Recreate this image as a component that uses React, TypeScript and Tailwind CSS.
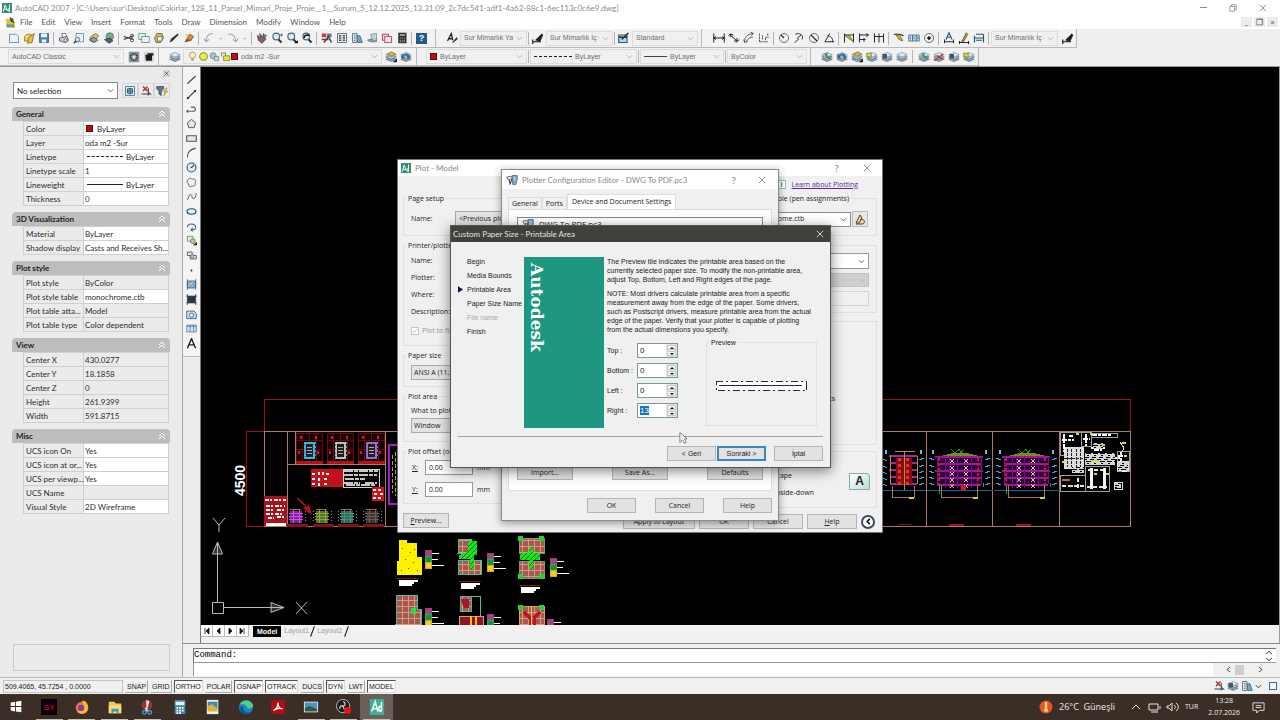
import type { ReactNode } from "react";

/* ---------- icons ---------- */

const INK = "#22303f";
const BLUE = "#3f7fa6";

const sheet = <path d="M2 3h9l3 3v8H2z" fill="#eaf4f8" stroke={BLUE} />;
const layers = (
  <>
    <path d="M1 11l7-3 7 3-7 3z" fill="#8ea3b2" stroke="#5f7789" />
    <path d="M1 8l7-3 7 3-7 3z" fill="#b4c5d0" stroke="#5f7789" />
    <path d="M1 5l7-3 7 3-7 3z" fill="#e4ecf0" stroke="#7d93a2" />
  </>
);
const lens = (
  <>
    <circle cx="7" cy="6" r="4.5" fill="#dcebf2" stroke="#4a6577" strokeWidth="1.5" />
    <path d="M10 10l4 4" stroke={INK} strokeWidth="2.5" />
  </>
);

const ICONS: Record<string, ReactNode> = {
  new: sheet,
  open: (
    <>
      <path d="M2 6l3-3h6l-2 9H2z" fill="#f4d35e" stroke="#8a6d1a" />
      <path d="M7 8l8-6-3 12-6 1z" fill="#e6c04a" stroke="#75601f" />
    </>
  ),
  save: (
    <>
      <path d="M2 2h12v12H2z" fill="#4b83ab" stroke="#2d5877" />
      <path d="M4 2h8v5H4zM5 10h6v4H5z" fill="#eef5f8" />
    </>
  ),
  print: (
    <>
      <path d="M5 2h5l2 5H6z" fill="#fff" stroke="#556" />
      <path d="M2 8l10-2 2 5-4 3-8-2z" fill="#c7ced6" stroke="#445" />
      <circle cx="10" cy="11" r="2" fill="#fff" stroke="#445" />
    </>
  ),
  plotter: (
    <>
      <path d="M1 4l6-1 2 3-6 2z" fill="#dbe6ee" stroke="#456" />
      <path d="M4 8l2 6M8 7l-3 7" stroke="#345" strokeWidth="1.5" />
      <path d="M8 2h7v5l-2 7H9z" fill="#7ea6c4" stroke="#3d5f7a" />
      <path d="M10 5h3M10 8h3" stroke="#fff" />
    </>
  ),
  preview: (
    <>
      <path d="M4 2h10v11H4z" fill="#f3f8fa" stroke={BLUE} />
      <circle cx="6" cy="10" r="3" fill="#d5e6ee" stroke="#3a5b70" />
      <path d="M4 12l-3 3" stroke={INK} strokeWidth="2" />
    </>
  ),
  publish: (
    <>
      <path d="M3 7l7-5 4 3-6 9-5-2z" fill="#e2c65b" stroke="#605528" />
      <path d="M2 10l6-3 5 4-5 3z" fill="#8ba0b5" stroke="#445" />
    </>
  ),
  dwf: (
    <>
      <circle cx="9" cy="6" r="5" fill="#6fae86" stroke="#4a6d75" />
      <path d="M2 10l8-2 3 4-5 3z" fill="#54636e" stroke="#334" />
    </>
  ),
  cut: (
    <>
      <path d="M1 6l13 4M1 10l13-5" stroke="#333" strokeWidth="1.5" />
      <circle cx="12" cy="5" r="2" fill="none" stroke="#333" />
      <circle cx="12" cy="11" r="2" fill="none" stroke="#333" />
    </>
  ),
  copy: (
    <>
      <path d="M1 2h9v8H1z" fill="#e8f2ee" stroke="#4f8a84" />
      <path d="M5 6h10v8H5z" fill="#f5faf8" stroke="#3f7f86" />
    </>
  ),
  paste: (
    <>
      <path d="M2 8l3-6h7l2 6-4 6H4z" fill="#cdbb62" stroke="#5d5b32" />
      <path d="M6 6h6v6H6z" fill="#e8eff0" stroke="#667" />
    </>
  ),
  brush: <path d="M2 14l2-5 9-7 1 2-8 8z" fill="#333" />,
  match: (
    <>
      <path d="M2 14l3-6 5 4z" fill="#7a5a2a" />
      <path d="M6 7l3-4 5 3-4 6z" fill="#e8883a" stroke="#75401a" />
      <path d="M3 5l3-3 2 3" fill="#d8c33a" />
    </>
  ),
  undo: <path d="M13 2C7 2 4 6 4 13M1 9l3 4 4-3" fill="none" stroke="#a6aab0" strokeWidth="1.5" />,
  redo: <path d="M2 3c6-1 9 3 10 10M8 10l4 3 3-4" fill="none" stroke="#a6aab0" strokeWidth="1.5" />,
  drop: <path d="M5 7h6l-3 3z" fill="#bbb" />,
  pan: (
    <>
      <path d="M2 4l4 4-1-6 4 5 1-5 3 8-5 5-5-4z" fill="#8a5d74" stroke="#4b3648" />
      <path d="M11 2l4 3-3 2z" fill="#3b9a62" />
    </>
  ),
  zoom: (
    <>
      {lens}
      <path d="M12 4h4M14 2v4" stroke="#445" />
    </>
  ),
  zoomWin: (
    <>
      {lens}
      <path d="M11 15h5v-4z" fill="#111" />
    </>
  ),
  zoomPrev: (
    <>
      {lens}
      <path d="M4 8c0-4 5-5 7-3" stroke="#111" strokeWidth="2" fill="none" />
    </>
  ),
  props: (
    <>
      <path d="M1 2h6v5H1z" fill="#c83a44" />
      <path d="M8 2h6v5H8z" fill="#6b7788" />
      <path d="M4 14l6-8 4 8M1 10h9" stroke="#5a3e46" strokeWidth="2" fill="none" />
    </>
  ),
  grid: (
    <>
      <path d="M2 2h12v12H2z" fill="#e4ebee" stroke="#455" />
      <path d="M4 5h3M9 5h3M4 8h3M9 8h3M4 11h3M9 11h3" stroke="#456" strokeWidth="2" />
    </>
  ),
  palette: (
    <>
      <path d="M2 2h6v12H2z" fill="#dce8ef" stroke="#345c78" />
      <path d="M8 5h4l3 9H9z" fill="#7aa6bd" stroke="#345c78" />
      <path d="M4 5h2M4 8h2M4 11h2" stroke="#234" />
    </>
  ),
  sheets: (
    <>
      <path d="M2 11l5-2h7v4H5z" fill="#8fa1aa" stroke="#667" />
      <path d="M6 3l8-1v9H9z" fill="#c5d2d8" stroke="#789" />
    </>
  ),
  markup: (
    <>
      <path d="M2 3h8v8H2z" fill="#f5dfe4" stroke="#b34a5c" strokeWidth="1.5" />
      <path d="M5 6h9v8H5z" fill="#ecebf4" stroke="#c2566a" strokeWidth="1.5" />
    </>
  ),
  calc: (
    <>
      <path d="M3 1h11v14H3z" fill="#2e2e2c" />
      <path d="M5 3h7v2H5z" fill="#b9c9a8" />
      <path d="M5 8h7M5 11h7M5 13h7" stroke="#ddd" strokeDasharray="1.5 1.2" />
    </>
  ),
  textStyle: (
    <>
      <path d="M2 12L7 2l2 9M4 9h5" stroke="#222" strokeWidth="1.7" fill="none" />
      <path d="M8 14l6-7 2 2-6 5z" fill="#333" />
    </>
  ),
  dimStyle: (
    <>
      <path d="M1 13h11M1 10v6" stroke="#111" strokeWidth="1.5" />
      <path d="M4 11L13 2l2 2-4 9z" fill="#222" />
    </>
  ),
  tableStyle: (
    <>
      <path d="M1 4h11v10H1z" fill="#bcd7e8" stroke="#295574" strokeWidth="1.5" />
      <path d="M1 7h11M5 10l9-9" stroke="#234" strokeWidth="1.8" />
    </>
  ),
  dimLinear: <path d="M1 2v12M15 2v12M1 8h14M4 6L1 8l3 2M12 6l3 2-3 2" stroke="#222" strokeWidth="1.3" fill="none" />,
  dimAligned: <path d="M1 5l3-3M11 14l4-4M3 4l9 8M3 7V3l4 1M12 8v4H8" stroke="#222" strokeWidth="1.3" fill="none" />,
  dimArc: <path d="M2 13C2 7 6 3 13 2M5 14c0-4 3-7 8-7M1 10l1 4 4-2M10 0l4 2-3 3" stroke="#333" fill="none" />,
  ordinate: <path d="M2 2v12M2 13h12M6 10V4M10 11V7h5M13 2v4" stroke="#444" strokeWidth="1.2" fill="none" strokeDasharray="3 1" />,
  radius: (
    <>
      <circle cx="8" cy="8" r="6" fill="none" stroke="#444" />
      <path d="M8 8L4 4" stroke="#222" strokeWidth="1.5" />
    </>
  ),
  jogged: <path d="M3 3c6-3 12 2 9 7M2 14l5-4-1-2 5-4" stroke="#333" strokeWidth="1.3" fill="none" />,
  diameter: (
    <>
      <circle cx="8" cy="8" r="6" fill="none" stroke="#444" />
      <path d="M4 4l8 8" stroke="#222" strokeWidth="1.5" />
    </>
  ),
  angular: <path d="M2 13h13M3 12L9 2M6 5c4 0 7 3 7 8" stroke="#222" strokeWidth="1.3" fill="none" />,
  quick: (
    <>
      <path d="M2 2v12M14 2v12M2 4h12" stroke="#222" strokeWidth="1.3" />
      <path d="M3 5h6l4 7-5-3z" fill="#c8c13a" stroke="#5f6420" />
    </>
  ),
  baseline: <path d="M2 2v12M2 4h12M2 10h8M11 2l3 2-3 2M8 8v5" stroke="#222" strokeWidth="1.3" fill="none" />,
  cont: <path d="M2 2v12M8 2v12M14 2v12M2 6h12" stroke="#222" strokeWidth="1.3" fill="none" />,
  leader: (
    <>
      <path d="M1 3h8l5 2" stroke="#222" strokeWidth="1.5" fill="none" />
      <path d="M4 4h5l4 8-5-2z" fill="#bcb93a" stroke="#5f6420" />
    </>
  ),
  tol: (
    <>
      <path d="M1 4h14v8H1z" fill="#cfe0ea" stroke="#285878" />
      <path d="M6 4v8M11 4v8M3 6v4M8 6v4M13 6v4" stroke="#285878" />
    </>
  ),
  center: (
    <>
      <circle cx="8" cy="8" r="6" fill="none" stroke="#444" />
      <path d="M8 5.500v5M5.500 8h5" stroke="#111" strokeWidth="2" />
    </>
  ),
  dimEdit: (
    <>
      <path d="M2 10v5M14 10v5M2 13h12" stroke="#222" strokeWidth="1.3" />
      <path d="M4 10L8 1l4 9M6 7h4" stroke="#2b5d74" strokeWidth="1.6" fill="none" />
    </>
  ),
  dimText: (
    <>
      <path d="M1 14h14M2 12v4M14 12v4" stroke="#222" strokeWidth="1.3" />
      <path d="M5 13L11 1l2 2-5 9z" fill="#bba92f" stroke="#4d4a20" />
    </>
  ),
  dimUpdate: <path d="M2 5v9M14 3v11M2 8h12M4 3h10M4 11h8" stroke="#245a63" strokeWidth="1.6" fill="none" />,
  gear: (
    <>
      <path d="M1 1h14v14H1z" fill="#8b979c" />
      <circle cx="8" cy="8" r="4.500" fill="none" stroke="#2c3a40" strokeWidth="2" strokeDasharray="2 1" />
      <circle cx="8" cy="8" r="2" fill="#e2e7e9" />
    </>
  ),
  wsSave: (
    <>
      <path d="M1 1h14v14H1z" fill="#d4d9dc" />
      <path d="M3 5h3V3h8v3h-2v7H4z" fill="#1d1d1d" />
    </>
  ),
  layers,
  layersY: (
    <>
      {layers}
      <path d="M3 4l6-3 5 3-6 3z" fill="#cfc136" stroke="#77702a" />
      <path d="M10 15h6v-5z" fill="#222" />
    </>
  ),
  layersG: (
    <>
      {layers}
      <path d="M4 3h5v4h4v5l-6-3z" fill="#4d8b76" />
    </>
  ),
  layersBack: (
    <>
      {layers}
      <path d="M13 10c1-6-4-9-9-5l-2-1v6h5L5 7c3-2 5-1 5 4z" fill="#36698e" />
    </>
  ),
  layersCut: (
    <>
      {layers}
      <path d="M2 13L13 4M5 6l8 5" stroke="#b53a4a" strokeWidth="2" />
    </>
  ),
  layersLock: (
    <>
      {layers}
      <path d="M2 4h6v6H2z" fill="#41566b" />
    </>
  ),
  layersUnlock: (
    <>
      {layers}
      <path d="M1 3h6v5H1z" fill="#d6dc38" stroke="#6f7a22" />
    </>
  ),
  bulb: (
    <>
      <circle cx="8" cy="6" r="4.500" fill="#f7f4a8" stroke="#8a8a4a" />
      <path d="M6 11h4v3H6z" fill="#99a" />
    </>
  ),
  sun: <circle cx="8" cy="8" r="5.500" fill="#eef03c" stroke="#7d8a3a" strokeWidth="1.500" />,
  vp: (
    <>
      <circle cx="6" cy="7" r="4.500" fill="#a9c4c8" stroke="#5c7d85" />
      <path d="M8 8h6v6H8z" fill="#c9d8db" stroke="#5c7d85" />
    </>
  ),
  unlock: (
    <>
      <path d="M5 7h9v7H5z" fill="#d9e23e" stroke="#6f7a22" />
      <path d="M2 8V3h6v4" fill="none" stroke="#8a9230" strokeWidth="1.500" />
    </>
  ),
  /* draw toolbar */
  line: <path d="M2 14L14 3" stroke={INK} strokeWidth="1.700" />,
  xline: (
    <>
      <path d="M2 14L14 2" stroke={INK} strokeWidth="1.500" />
      <path d="M1 15l1-4 3 3zM15 1l-4 1 3 3z" fill={INK} />
    </>
  ),
  pline: <path d="M1 12h9c5 0 5-6 0-6H7M3 10l-2 2 2 2" stroke="#4d6473" strokeWidth="1.500" fill="none" />,
  polygon: <path d="M8 2l6 5-2 7H4L2 7z" fill="#dfe8e4" stroke="#3f4f4a" strokeWidth="1.300" />,
  rect: <path d="M1 4h14v8H1z" fill="#e3eaec" stroke="#44566a" strokeWidth="1.500" />,
  arc: <path d="M2 15C2 8 6 3 14 2" fill="none" stroke="#3b4d5e" strokeWidth="1.500" />,
  circle: (
    <>
      <circle cx="8" cy="8" r="6.500" fill="#d9eaf2" stroke="#37576f" strokeWidth="1.500" />
      <path d="M8 8l4-4M7 8h2" stroke="#223" strokeWidth="1.500" />
    </>
  ),
  cloud: <path d="M4 3c3-3 5 1 6 0 4-1 5 3 3 5 2 4-1 6-4 5-3 3-6 0-5-3-4-2-2-6 0-7z" fill="#eef2f3" stroke="#4c5a63" strokeWidth="1.300" />,
  spline: <path d="M1 13c4-1 2-9 6-8 3 1 0 6 4 6 3 0 3-4 4-8" fill="none" stroke="#46545d" strokeWidth="1.300" />,
  ellipse: <ellipse cx="8" cy="8" rx="6.500" ry="4" fill="#e2edf2" stroke="#2b4f6b" strokeWidth="1.700" />,
  earc: <path d="M2 9c0-6 12-6 12 0 0 3-3 4-6 4M10 10l-3 3 3 2" fill="none" stroke="#3e6a78" strokeWidth="1.500" />,
  insert: (
    <>
      <path d="M2 2h8v7H2z" fill="#e6ecd5" stroke="#5c6f5a" />
      <circle cx="10" cy="9" r="3.500" fill="#b7cf8f" stroke="#4f6b4a" />
      <path d="M10 15h6v-5z" fill="#111" />
    </>
  ),
  block: (
    <>
      <path d="M2 3h7v5H2zM6 8h9v5H6z" fill="#dfe9dc" stroke="#4a6175" strokeWidth="1.300" />
      <circle cx="9" cy="9" r="2.500" fill="#cfd78a" stroke="#51605a" />
    </>
  ),
  point: <circle cx="8" cy="8" r="1.300" fill="#222" />,
  hatch: (
    <>
      <path d="M2 3h12v10H2z" fill="#a8c6dc" stroke="#3d5e7b" strokeWidth="1.300" />
      <path d="M2 9l6-6M4 13L14 4M9 13l5-5M2 0v16M14 0v16" stroke="#3d5e7b" />
    </>
  ),
  gradient: (
    <>
      <path d="M2 3h12v10H2z" fill="#2b3640" />
      <path d="M2 0v16M14 0v16M0 3h16M0 13h16" stroke="#2b3640" />
    </>
  ),
  region: (
    <>
      <path d="M1 3h11l3 4v7H1z" fill="#c9dceb" stroke="#44698a" strokeWidth="1.300" />
      <circle cx="8" cy="9" r="3" fill="#f3f7fa" stroke="#44698a" strokeWidth="1.300" />
    </>
  ),
  table: (
    <>
      <path d="M1 3h14v10H1z" fill="#d8e7f4" stroke="#5c86ae" strokeWidth="1.300" />
      <path d="M1 5h14M6 3v10M11 3v10" stroke="#5c86ae" strokeWidth="1.300" />
    </>
  ),
  mtext: <path d="M2 15L8 1l6 14M4 10h8" fill="none" stroke="#1d1d1d" strokeWidth="2" />,
  quickSel: (
    <>
      <path d="M1 2h9v3L7 8v6l-3-2V8L1 5z" fill="#55788f" stroke="#2d4a5e" />
      <path d="M13 4l-4 5h3l-2 6 6-7h-3l2-4z" fill="#e3c93b" stroke="#8a7420" strokeWidth=".5" />
    </>
  ),
  pickAdd: (
    <>
      <path d="M2 2h12v12H2z" fill="#eaf2f6" stroke="#5e7f94" strokeWidth="1.300" />
      <path d="M5 5h6v6H5zM8 3.500v9M3.500 8h9" fill="none" stroke="#1f5478" strokeWidth="1.500" />
    </>
  ),
  select: (
    <>
      <path d="M4 2l6 6M10 2L4 8" stroke="#b9303c" strokeWidth="2" />
      <path d="M11 4v10M2 12h12M11 9l4 4" stroke="#333" strokeWidth="1.300" />
    </>
  ),
};

function Icon({ name, className = "size-[12px]" }: { name: string; className?: string }) {
  return (
    <svg viewBox="0 0 16 16" className={`${className} shrink-0`} aria-hidden="true">
      {ICONS[name]}
    </svg>
  );
}

function AcadLogo({ className = "size-[10px]" }: { className?: string }) {
  return (
    <svg viewBox="0 0 16 16" className={`${className} shrink-0`} aria-hidden="true">
      <path d="M0 0h16v16H0z" fill="#2f8f78" />
      <path d="M2 14L5 3l4 10M3 10h5M12 2v12M12 8c-3 0-3 6 0 6" fill="none" stroke="#e9f6f2" strokeWidth="1.600" />
    </svg>
  );
}

function Chevron({ tone = "#777" }: { tone?: string }) {
  return (
    <svg viewBox="0 0 8 8" className="pointer-events-none size-[7px] shrink-0" aria-hidden="true">
      <path d="M1 2.500l3 3 3-3" fill="none" stroke={tone} />
    </svg>
  );
}

function Cross({ tone = "#777", className = "size-[9px]" }: { tone?: string; className?: string }) {
  return (
    <svg viewBox="0 0 10 10" className={className} aria-hidden="true">
      <path d="M1 1l8 8M9 1L1 9" stroke={tone} fill="none" />
    </svg>
  );
}

/* ---------- small controls ---------- */

type ComboProps = { label: string; value: string; className: string; lead?: ReactNode; tone?: string };

function Combo({ label, value, className, lead, tone = "#aaa" }: ComboProps) {
  return (
    <label className={`flex shrink-0 items-center gap-[3px] overflow-hidden border px-[3px] ${className}`}>
      {lead}
      <select aria-label={label} className="min-w-0 flex-1 appearance-none bg-transparent outline-none">
        <option>{value}</option>
      </select>
      <Chevron tone={tone} />
    </label>
  );
}

const barCombo = "h-[15px] border-[#dcdcdc] bg-[#f0f0f0] text-[#6d6d6d]";

function Tool({ name }: { name: string }) {
  return (
    <button aria-label={name} className="flex h-[15px] w-[15px] shrink-0 items-center justify-center">
      <Icon name={name} />
    </button>
  );
}

const Sep = () => <span className="h-[13px] w-px shrink-0 bg-[#b4b4b4]" />;

function Tools({ names }: { names: string[] }) {
  return (
    <div className="flex items-center">
      {names.map((n) => (
        <Tool key={n} name={n} />
      ))}
    </div>
  );
}

function Bar({ children, className = "gap-[2px]" }: { children: ReactNode; className?: string }) {
  return <div className={`flex h-full items-center border-r border-b border-[#b9b9b9] bg-[#f2f2f2] ${className}`}>{children}</div>;
}

/* ---------- header ---------- */

const MENUS = ["File", "Edit", "View", "Insert", "Format", "Tools", "Draw", "Dimension", "Modify", "Window", "Help"];

function TitleBar() {
  return (
    <header className="bg-white text-[#8b8b8b]">
      <div className="flex h-[15px] items-center gap-[3px] px-[2px]">
        <AcadLogo />
        <h1 className="truncate">
          AutoCAD 2007 - [C:\Users\sur\Desktop\Cakirlar_128_11_Parsel_Mimari_Proje_Proje__1__Surum_5_12.12.2025_13.31.09_2c7dc541-adf1-4a62-88c1-6ec113c0c6e9.dwg]
        </h1>
        <div className="ml-auto flex items-center gap-[22px] pr-[11px]">
          <button aria-label="Minimize" className="h-px w-[7px] bg-[#888]" />
          <button aria-label="Restore">
            <svg viewBox="0 0 10 10" className="size-[8px]">
              <path d="M1 3h6v6H1zM3 3V1h6v6H7" fill="none" stroke="#888" />
            </svg>
          </button>
          <button aria-label="Close">
            <Cross className="size-[8px]" />
          </button>
        </div>
      </div>
      <div className="flex h-[14px] items-center pl-[5px]">
        <svg viewBox="0 0 12 12" className="size-[11px]" aria-hidden="true">
          <path d="M1 2h6l4 4v6H2z" fill="#e8bf33" />
          <path d="M5 0l4 2 1 5-4-2z" fill="#46525e" />
          <path d="M1 8h9v3H2z" fill="#5aa0b4" />
        </svg>
        <nav className="ml-1 flex gap-[9px] text-[#555]">
          {MENUS.map((m) => (
            <button key={m}>{m}</button>
          ))}
        </nav>
        <div className="ml-auto flex gap-[2px] pr-[2px]">
          {["_", "❐", "×"].map((g) => (
            <button key={g} aria-label={`Drawing ${g}`} className="h-[10px] w-[11px] bg-[#ececec] text-[8px] leading-[9px] font-bold text-[#777]">
              {g}
            </button>
          ))}
        </div>
      </div>
    </header>
  );
}

const redSwatch = <span className="size-[7px] shrink-0 border border-[#5c0808] bg-[#c00d14]" />;

function ToolbarRows() {
  return (
    <div className="bg-[#efefef] font-['Liberation_Sans',sans-serif] text-[7px]">
      <div className="flex h-[19px] items-center">
        <Bar className="w-[436px] gap-[2px] pl-[6px]">
          <Tools names={["new", "open", "save"]} />
          <Sep />
          <Tools names={["print", "preview", "publish", "dwf"]} />
          <Sep />
          <Tools names={["cut", "copy", "paste", "brush", "match"]} />
          <Sep />
          <div className="flex items-center">
            <Tool name="undo" />
            <Icon name="drop" className="size-[9px]" />
            <Tool name="redo" />
            <Icon name="drop" className="size-[9px]" />
          </div>
          <Sep />
          <Tools names={["pan", "zoom", "zoomWin", "zoomPrev"]} />
          <Sep />
          <Tools names={["props", "grid", "palette", "sheets", "markup", "calc"]} />
          <Sep />
          <button aria-label="Help" className="ml-[2px] flex size-[11px] items-center justify-center bg-[#245a86] text-[9px] font-bold text-white">
            ?
          </button>
        </Bar>
        <Bar className="w-[266px] gap-px pl-[8px]">
          <Tool name="textStyle" />
          <Combo label="Text style" value="Sur Mimarlık Yazı" className={`w-[67px] ${barCombo}`} />
          <Sep />
          <Tool name="dimStyle" />
          <Combo label="Dimension style" value="Sur Mimarlık İç Ölçü" className={`w-[67px] ${barCombo}`} />
          <Sep />
          <Tool name="tableStyle" />
          <Combo label="Table style" value="Standard" className={`w-[66px] ${barCombo}`} />
        </Bar>
        <Bar className="w-[375px] gap-[2px] pl-[9px]">
          <Tools names={["dimLinear", "dimAligned", "dimArc", "ordinate"]} />
          <Sep />
          <Tools names={["radius", "jogged", "diameter", "angular"]} />
          <Sep />
          <Tools names={["quick", "baseline", "cont"]} />
          <Sep />
          <Tools names={["leader", "tol", "center"]} />
          <Sep />
          <Tools names={["dimEdit", "dimText", "dimUpdate"]} />
          <Sep />
          <Combo label="Dim style control" value="Sur Mimarlık İç Ölçü" className={`w-[67px] ${barCombo}`} />
          <Tool name="dimStyle" />
        </Bar>
      </div>
      <div className="flex h-[19px] items-center border-b border-[#9a9a9a]">
        <Bar className="w-[159px] gap-[2px] pl-[8px]">
          <Combo label="Workspace" value="AutoCAD Classic" className={`w-[116px] ${barCombo}`} />
          <Tools names={["gear", "wsSave"]} />
        </Bar>
        <Bar className="w-[258px] gap-px pl-[8px]">
          <Tool name="layers" />
          <Combo
            label="Layer"
            value="oda m2 -Sur"
            className={`w-[199px] ${barCombo}`}
            lead={
              <span className="flex items-center">
                <Icon name="bulb" className="size-[11px]" />
                <Icon name="sun" className="size-[11px]" />
                <Icon name="vp" className="size-[11px]" />
                <Icon name="unlock" className="size-[11px]" />
                {redSwatch}
              </span>
            }
          />
          <Tools names={["layersY", "layersBack"]} />
        </Bar>
        <Bar className="w-[394px] gap-px pl-[9px]">
          <Combo label="Color" value="ByLayer" className={`w-[101px] ${barCombo}`} lead={redSwatch} />
          <Sep />
          <Combo
            label="Linetype"
            value="ByLayer"
            className={`w-[107px] ${barCombo}`}
            lead={<span className="w-[38px] border-t border-dashed border-[#222]" />}
          />
          <Sep />
          <Combo
            label="Lineweight"
            value="ByLayer"
            className={`w-[84px] ${barCombo}`}
            lead={<span className="w-[23px] border-t border-[#444]" />}
          />
          <Sep />
          <Combo label="Plot style" value="ByColor" className={`w-[80px] ${barCombo}`} />
        </Bar>
        <Bar className="w-[168px] gap-[3px] pl-[8px]">
          <Tools names={["layersG", "layersBack", "layersY", "layersUnlock", "layersLock", "layers"]} />
          <Sep />
          <Tools names={["layersG", "layersCut", "layersLock", "layersUnlock"]} />
        </Bar>
      </div>
    </div>
  );
}

/* ---------- properties palette ---------- */

type Prop = { name: string; value: string; editable?: boolean; lead?: ReactNode };

const GROUPS: { title: string; rows: Prop[] }[] = [
  {
    title: "General",
    rows: [
      { name: "Color", value: "ByLayer", editable: true, lead: <span className="mx-px size-[7px] border border-[#5c0808] bg-[#c00d14]" /> },
      { name: "Layer", value: "oda m2 -Sur", editable: true },
      { name: "Linetype", value: "ByLayer", editable: true, lead: <span className="ml-[2px] w-[36px] border-t border-dashed border-[#222]" /> },
      { name: "Linetype scale", value: "1", editable: true },
      { name: "Lineweight", value: "ByLayer", editable: true, lead: <span className="ml-[2px] w-[36px] border-t border-[#222]" /> },
      { name: "Thickness", value: "0", editable: true },
    ],
  },
  {
    title: "3D Visualization",
    rows: [
      { name: "Material", value: "ByLayer", editable: true },
      { name: "Shadow display", value: "Casts and Receives Sh...", editable: true },
    ],
  },
  {
    title: "Plot style",
    rows: [
      { name: "Plot style", value: "ByColor" },
      { name: "Plot style table", value: "monochrome.ctb", editable: true },
      { name: "Plot table atta...", value: "Model" },
      { name: "Plot table type", value: "Color dependent" },
    ],
  },
  {
    title: "View",
    rows: [
      { name: "Center X", value: "430.0277" },
      { name: "Center Y", value: "18.1858" },
      { name: "Center Z", value: "0" },
      { name: "Height", value: "261.9399" },
      { name: "Width", value: "591.8715" },
    ],
  },
  {
    title: "Misc",
    rows: [
      { name: "UCS icon On", value: "Yes", editable: true },
      { name: "UCS icon at or...", value: "Yes", editable: true },
      { name: "UCS per viewp...", value: "Yes", editable: true },
      { name: "UCS Name", value: "" },
      { name: "Visual Style", value: "2D Wireframe", editable: true },
    ],
  },
];

function PropertiesPalette() {
  return (
    <aside className="flex w-[183px] shrink-0 flex-col border-r border-[#a8a8a8] bg-[#ebebeb] pr-[12px] pb-[6px] pl-[12px] text-[#2c2c2c]">
      <button aria-label="Close palette" className="mt-[3px] flex size-[7px] items-center justify-center self-end bg-[#d6d6d6]">
        <Cross tone="#111" className="size-[5px]" />
      </button>
      <div className="mt-[5px] flex items-center gap-[4px]">
        <Combo label="Selection" value="No selection" className="ml-px h-[17px] w-[105px] border-[#8b8b8b] bg-white text-[#222]" tone="#555" />
        <div className="flex">
          {["pickAdd", "select", "quickSel"].map((n) => (
            <button key={n} aria-label={n} className="flex h-[15px] w-[16px] items-center justify-center border border-[#d6d6d6]">
              <Icon name={n} />
            </button>
          ))}
        </div>
      </div>
      <div className="mt-[8px] flex flex-col gap-[6px]">
        {GROUPS.map((g) => (
          <section key={g.title}>
            <h2 className="flex h-[14px] items-center justify-between rounded-t-[4px] bg-[#bdbdbd] px-[4px] font-bold text-[#222]">
              {g.title}
              <svg viewBox="0 0 8 8" className="size-[8px]" aria-hidden="true">
                <path d="M1 4l3-3 3 3M1 7l3-3 3 3" fill="none" stroke="#fff" />
              </svg>
            </h2>
            <table className="ml-[11px] w-[146px] table-fixed border-collapse">
              <tbody>
                {g.rows.map((r) => (
                  <tr key={r.name} className="h-[14px]">
                    <th scope="row" className="w-[60px] border border-[#cfcfcf] p-0 pl-[2px] text-left font-normal whitespace-nowrap">
                      {r.name}
                    </th>
                    <td className={`border border-[#cfcfcf] p-0 pl-[1px] whitespace-nowrap ${r.editable ? "bg-white" : ""}`}>
                      <span className="flex h-[13px] items-center gap-[3px]">
                        {r.lead}
                        {r.value}
                      </span>
                    </td>
                  </tr>
                ))}
              </tbody>
            </table>
          </section>
        ))}
      </div>
      <div className="mt-auto ml-px h-[27px] border border-[#cccccc]" />
    </aside>
  );
}

const DRAW = ["line", "xline", "pline", "polygon", "rect", "arc", "circle", "cloud", "spline", "ellipse", "earc", "insert", "block", "point", "hatch", "gradient", "region", "table", "mtext"];

function DrawToolbar() {
  return (
    <div className="flex w-[18px] shrink-0 flex-col border-r border-[#777] bg-[#ececec]">
      <div className="flex h-[290px] flex-col items-center justify-between border-b border-[#bbb] bg-[#f4f4f4] py-[7px]">
        {DRAW.map((n) => (
          <button key={n} aria-label={n}>
            <Icon name={n} className="size-[11px]" />
          </button>
        ))}
      </div>
    </div>
  );
}

/* ---------- drawing ---------- */

function Room({ x, accent }: { x: number; accent: string }) {
  return (
    <g>
      <path d={`M${x} 433h26v30h-26zM${x} 440h26M${x} 449h26M${x + 6} 433v30M${x + 13} 433v30M${x + 20} 433v30`} fill="#160101" stroke="#6a080c" />
      <path d={`M${x + 5} 436v3M${x + 20} 436v3M${x + 3} 451v3M${x + 22} 451v3`} stroke="#e01822" strokeWidth="2" />
      <rect x={x} y="461" width="27" height="3" fill="#b80e18" />
      <rect x={x + 9} y="443" width="9" height="15" fill="#15202b" stroke={accent} strokeWidth="2" />
      <path d={`M${x + 11} 447h5M${x + 11} 450h5M${x + 11} 453h5`} stroke="#d9a07a" />
      <path d={`M${x + 8} 444v15M${x + 19} 442v14`} stroke="#4f7bd8" strokeDasharray="2 2" />
    </g>
  );
}

function MiniElevation({ x, tone, body }: { x: number; tone: string; body: string }) {
  return (
    <g>
      <rect x={x} y="511" width="12" height="12" fill={body} />
      <path d={`M${x - 1} 513h14M${x - 1} 516h14M${x - 1} 519h14M${x + 3} 510v13M${x + 9} 510v13`} stroke={tone} />
      <path d={`M${x - 3} 511v12M${x + 15} 511v12`} stroke="#4d9ad6" strokeDasharray="1 2" />
      <path d={`M${x} 509h11`} stroke="#b06a5a" />
      <rect x={x - 3} y="524" width="21" height="3" fill="#8c1016" />
    </g>
  );
}

const FLOORS = [459, 466, 472, 478, 484];

function Elevation({ x, roof }: { x: number; roof: boolean }) {
  return (
    <g>
      <rect x={x} y="456" width="44" height="28" fill="#2c0430" />
      <path d={`M${x - 2} 456.500h48M${x} 463.500h44M${x - 2} 470.500h48M${x} 477.500h44M${x} 484.500h44`} stroke="#a512a8" strokeWidth="2" />
      <path d={`M${x} 456v28M${x + 8} 456v32M${x + 12} 456v32M${x + 20} 456v32M${x + 34} 456v32M${x + 44} 456v28`} stroke="#7a0e82" />
      <path d={`M${x + 2} 458v27M${x + 41} 458v27`} stroke="#c01848" strokeWidth="2" strokeDasharray="3 2" />
      {FLOORS.map((y) => (
        <g key={y}>
          <path d={`M${x + 13} ${y}l4 4m0-4l-4 4M${x + 27} ${y}l4 4m0-4l-4 4`} stroke="#e7b8b4" />
          <path d={`M${x - 8} ${y - 1}l5 2M${x + 48} ${y + 1}l5-2`} stroke="#4a9be0" />
        </g>
      ))}
      {roof && <path d={`M${x + 4} 456l12-3h14l12 3z`} fill="#7e8c14" />}
      {roof && <path d={`M${x + 14} 449l4 4 4-4 2 4 3-4`} stroke="#2a8f30" fill="none" />}
      <path d={`M${x - 4} 450v4M${x + 49} 450v4`} stroke="#7eb2dc" strokeWidth="2" />
      <path d={`M${x - 10} 490.500h66`} stroke="#215f92" />
      <path d={`M${x + 4} 485v12h36v-12`} fill="none" stroke="#a0785f" />
      <path d={`M${x + 36} 498h5`} stroke="#d6d03a" strokeWidth="2" />
      <path d={`M${x + 2} 486v8M${x + 46} 483v4`} stroke="#3a9a40" />
      <rect x={x + 12} y="524" width="15" height="2" fill="#a01218" />
    </g>
  );
}

function PlanTitle({ x, y }: { x: number; y: number }) {
  return (
    <g>
      <path d={`M${x} ${y + 0.5}h22`} stroke="#8c141c" />
      <path d={`M${x + 2} ${y + 2}h19v2h-4v2h-2v2h-13z`} fill="#fff" />
    </g>
  );
}

function Legend({ x, y }: { x: number; y: number }) {
  return (
    <g>
      <path d={`M${x} ${y}h6v6h-6z`} fill="#9a4a78" stroke="#a8368a" />
      <path d={`M${x} ${y + 6}h6v6h-6z`} fill="#1d8f3a" stroke="#2ab04a" />
      <path d={`M${x} ${y + 12}h6v6h-6z`} fill="#f0d21e" stroke="#e0a21e" />
      <path d={`M${x + 7} ${y + 3.5}h7M${x + 7} ${y + 9.5}h6M${x + 7} ${y + 15.5}h12`} stroke="#fff" />
    </g>
  );
}

function ModelSpace() {
  return (
    <svg viewBox="201 67 1078 558" preserveAspectRatio="xMinYMin slice" className="absolute inset-0 size-full" shapeRendering="crispEdges" fill="none" aria-label="Model space">
      <defs>
        <pattern id="brick" width="6" height="6" patternUnits="userSpaceOnUse">
          <rect width="6" height="6" fill="#a8594f" />
          <path d="M0 0h6M0 0v6" stroke="#d59a80" strokeWidth="1" />
        </pattern>
        <pattern id="green" width="5" height="5" patternUnits="userSpaceOnUse">
          <rect width="5" height="5" fill="#11e81a" />
          <path d="M0 5l5-5" stroke="#0a7a14" />
        </pattern>
        <pattern id="noise" width="7" height="8" patternUnits="userSpaceOnUse">
          <rect width="7" height="8" fill="#d4d4d4" />
          <path d="M0 1h4M5 3h2M1 5h5M2 7h2M0 3h2" stroke="#000" />
        </pattern>
      </defs>

      {/* sheet frame */}
      <path d="M264.500 431V399.500h866V431M264 431.500h-18v95h18" stroke="#9c1418" />
      <path d="M264.500 431.500h866v95h-866zM287.500 431v95M287 464.500h98M295.500 431v33M385.500 431v95M926.500 431v95M992.500 431v95M1059.500 431v95" stroke="#a77c6c" />
      <text transform="translate(245 496) rotate(-90)" fill="#fff" fontFamily="Liberation Sans, sans-serif" fontSize="14" fontWeight="700">
        4500
      </text>

      {/* left block */}
      <Room x={296} accent="#22c4e0" />
      <Room x={327} accent="#b9c4c0" />
      <Room x={358} accent="#a06ad0" />
      <rect x="311" y="469" width="32" height="18" fill="#c4101a" />
      <path d="M312 474h4M319 472v4M323 472v4M326 474h4M312 479h4M319 478v4M324 479h4M312 484h4M319 483v3M324 484h4" stroke="#fff" strokeWidth="2" strokeDasharray="3 1" />
      <rect x="343" y="469" width="36" height="18" fill="#050505" stroke="#d8d4d0" />
      <path d="M344 471h34M344 475h33M345 479h20M344 483h16M365 483h12M346 485h30" stroke="#c8c8c0" strokeWidth="2" strokeDasharray="9 1 4 1" />
      <rect x="372" y="487" width="12" height="14" fill="#d2101a" />
      <path d="M373 490h10M374 494h3M380 494h3M373 498h10" stroke="#fff" strokeWidth="2" strokeDasharray="3 2" />
      <path d="M298 498l10 11" stroke="#b2101a" strokeWidth="1.500" />
      <path d="M303 507l6-2 3 9-5-2z" fill="#b2101a" />
      <rect x="264" y="496" width="23" height="30" fill="#b0101a" />
      <path d="M265 500h21M266 506h19M266 510h8M277 510h8M266 514h18M268 518h6M277 517h9" stroke="#fff" strokeWidth="2" strokeDasharray="4 1 2 2" />
      <path d="M266 523h20v3h-20z" fill="#fff" />
      <MiniElevation x={290} tone="#e04ae0" body="#6d2a9a" />
      <MiniElevation x={316} tone="#a99a3a" body="#3f7a2d" />
      <MiniElevation x={341} tone="#4f8e7a" body="#2f6a5a" />
      <MiniElevation x={366} tone="#90504a" body="#24403a" />
      <path d="M388.500 444.500h12v59h-12z" stroke="#a81cc0" strokeWidth="2" />
      <path d="M392 455v38M395 452v44" stroke="#a7a23a" strokeDasharray="4 2" />

      {/* elevations */}
      <Elevation x={937} roof />
      <Elevation x={1004} roof />
      <g>
        <path d="M889 456h28M890 463h27M889 470h28M890 477h27M890 484h27" stroke="#b21ab4" strokeWidth="2" />
        <rect x="896" y="458" width="16" height="26" fill="#8a0c18" />
        <path d="M899 458v28M907 458v30" stroke="#e4392f" strokeWidth="3" strokeDasharray="3 3" />
        <path d="M890 456v28M904 452v38M917 456v28" stroke="#a89a2a" />
        <path d="M895 451h20" stroke="#b58a3a" />
        {FLOORS.map((y) => (
          <path key={y} d={`M883 ${y}l4 2M919 ${y + 1}l5-2`} stroke="#4a9be0" />
        ))}
        <path d="M886 450v4M921 450v4" stroke="#7eb2dc" strokeWidth="2" />
        <path d="M883 490.500h43" stroke="#215f92" />
        <path d="M892 486v11h22v-11" stroke="#a0785f" />
        <path d="M909 498h5" stroke="#d6d03a" strokeWidth="2" />
        <path d="M898 524.500h14" stroke="#8a1016" />
      </g>
      <rect x="961" y="485" width="5" height="5" fill="#e01228" />

      {/* detail sheet */}
      <path d="M1060.500 432.500h21v23h-21zM1081.500 432.500h10v14h-10zM1091.500 433.500h26v4h-26zM1060.500 475.500h25v16h-25zM1085.500 466.500h24v25h-24zM1117.500 451.500h12v20h-12z" stroke="#a0a0a0" />
      <rect x="1064" y="447" width="20" height="22" fill="#dcdcdc" />
      <path d="M1067 449v18M1071 449v18M1076 449v18M1080 449v18M1064 458h20" stroke="#222" strokeDasharray="3 1" />
      <path d="M1064 434v18M1062 440h12M1069 436h4M1086 434v12M1083 439h7M1092 435h20M1091 448h14M1094 450h8M1086 457h10M1096 460h18M1100 455v10M1112 458h8M1121 452v12M1118 456h8M1118 466h10M1122 471h6" stroke="#fff" strokeWidth="2" strokeDasharray="5 1 3 1" />
      <rect x="1093" y="443" width="10" height="6" fill="url(#noise)" />
      <rect x="1085" y="453" width="30" height="12" fill="url(#noise)" />
      <rect x="1072" y="467" width="12" height="6" fill="url(#noise)" />
      <path d="M1091 468v21M1104 468v21" stroke="#f4f4f4" strokeWidth="3" />
      <path d="M1088 470h18M1087 487h20M1062 486h22M1078 478v12" stroke="#e4e4e4" strokeWidth="2" strokeDasharray="4 2" />
      <path d="M1062 480h8" stroke="#c86a2a" strokeWidth="2" />
      <path d="M1076 434h3M1090 434h3M1102 445h3M1062 462h3M1091 461h8M1122 443h4M1124 456h3M1094 474h3M1106 474h3M1070 486h3" stroke="#d9e03a" strokeWidth="2" />
      <path d="M1120 442l4 6-4 8M1114 482h8v7h-8z" stroke="#ddd" />
      <rect x="1117" y="461" width="11" height="9" fill="url(#noise)" stroke="#ddd" />
      <rect x="1115" y="483" width="6" height="5" fill="url(#noise)" />

      {/* floor plans */}
      <path d="M399 540h8v3h10v14h5v18h-25v-14h2z" fill="#fff200" />
      <path d="M402 548h1M410 552h1M405 559h1M413 562h1M408 568h1M401 570h1M414 549h1M417 570h1" stroke="#555" />
      <PlanTitle x={397} y={578} />
      <Legend x={425} y={550} />
      <path d="M459 539h12v14h-13zM458 560h23v14h-23z" fill="url(#brick)" stroke="#3fbf9a" />
      <path d="M468 541h9v14h-3v14h-4v-10h-11v-4l9-3z" fill="url(#green)" />
      <PlanTitle x={459} y={581} />
      <Legend x={487} y={553} />
      <path d="M519 538h25v15h-25zM519 561h25v17h-25z" fill="url(#brick)" stroke="#7a9a6a" />
      <path d="M520 553h20v7h-20zM529 547h4v22h-4z" fill="url(#green)" />
      <path d="M518 536h5v5h-5zM539 536h5v5h-5zM518 574h5v5h-5zM539 574h5v5h-5z" fill="#1fd63a" />
      <PlanTitle x={519} y={585} />
      <Legend x={550} y={558} />
      <path d="M397 595h20v14h4v16h-25z" fill="url(#brick)" stroke="#3fbf9a" />
      <path d="M411 608h5v6h-5z" fill="#1fe04a" />
      <Legend x={425} y={608} />
      <path d="M460 596h11v15h-11z" fill="url(#brick)" stroke="#3fbf9a" />
      <path d="M461 599h8v9h-5z" fill="#b01420" />
      <path d="M471 596h9v20" stroke="#3fbf9a" />
      <path d="M459 616h24v9h-24z" fill="#8f1620" stroke="#d59a80" />
      <path d="M471 616v9M476 616v9" stroke="#f0c02a" strokeWidth="2" />
      <Legend x={487} y={614} />
      <path d="M519 606h25v19h-25z" fill="url(#brick)" stroke="#e0a23a" />
      <path d="M524 612l6 6v7M540 612l-6 6v7" stroke="#c01420" strokeWidth="3" />
      <path d="M531 606v19" stroke="#e8d23a" />
      <path d="M518 605h5v5h-5zM539 605h5v5h-5z" fill="#1fd63a" />
      <Legend x={547} y={619} />

      {/* UCS icon */}
      <g stroke="#b9b9b9" shapeRendering="auto">
        <path d="M212.500 602.500h11v11h-11zM217.500 602V542M223 607.500h61" />
        <path d="M217.500 542l-5 12h10zM284 607.500l-13-5v10zM217.500 542v12M284 607.500h-13" fill="#333" />
        <path d="M213 518l6 7 6-7M219 525v7M296 602l11 12M307 602l-11 12" />
      </g>
    </svg>
  );
}

function LayoutTabs() {
  return (
    <div className="flex h-[12px] items-stretch bg-[#f0f0f0] font-['Liberation_Sans',sans-serif] text-[7px]">
      {["M3 1v6M7 1L4 4l3 3z", "M6 1L3 4l3 3z", "M3 1l3 3-3 3z", "M2 1l3 3-3 3zM6 1v6"].map((d) => (
        <button key={d} aria-label="Scroll tabs" className="flex w-[12px] items-center justify-center border-r border-b border-[#bbb] bg-white">
          <svg viewBox="0 0 9 8" className="h-[8px] w-[9px]">
            <path d={d} fill="#111" stroke="#111" strokeWidth=".8" />
          </svg>
        </button>
      ))}
      <div className="ml-[4px] flex items-center">
        <button className="h-[11px] bg-black px-[4px] leading-[11px] font-bold text-white">Model</button>
        <button className="px-[3px] text-[#a0a0a0]">Layout1</button>
        <span className="h-[11px] w-px rotate-[20deg] bg-black" />
        <button className="px-[4px] text-[#a0a0a0]">Layout2</button>
        <span className="h-[11px] w-px rotate-[20deg] bg-black" />
      </div>
    </div>
  );
}

function CommandWindow() {
  return (
    <div className="border-t border-[#8c8c8c] bg-[#f0f0f0] pt-[4px] pr-[4px] pb-px pl-[10px] font-['Liberation_Mono',monospace] text-[9px]">
      <div className="flex h-[14px] items-center justify-between border-t border-l border-[#777] bg-white pr-[3px]">
        <output className="leading-[11px]">Command:</output>
        <svg viewBox="0 0 8 12" className="h-[12px] w-[8px]" aria-hidden="true">
          <path d="M1 4l3-2.500L7 4M1 8l3 2.500L7 8" fill="none" stroke="#444" />
        </svg>
      </div>
      <div className="flex h-[14px] items-center border-t border-l border-[#999] bg-white">
        <input aria-label="Command line" className="h-full min-w-0 flex-1 outline-none" />
        <div className="flex h-full items-center gap-[4px] bg-[#f0f0f0] px-[13px] text-[#333]">
          <svg viewBox="0 0 6 8" className="h-[7px] w-[5px]">
            <path d="M5 1L1 4l4 3" fill="none" stroke="#333" />
          </svg>
          <span className="h-[10px] w-[9px] bg-[#cdcdcd]" />
          <span className="w-[6px]" />
          <svg viewBox="0 0 6 8" className="h-[7px] w-[5px]">
            <path d="M1 1l4 3-4 3" fill="none" stroke="#333" />
          </svg>
        </div>
      </div>
    </div>
  );
}

/* ---------- dialogs ---------- */

function Group({ title, className = "", children }: { title?: string; className?: string; children?: ReactNode }) {
  return (
    <fieldset className={`min-w-0 border border-[#dfdfdf] ${className}`}>
      {title && <legend className="ml-[2px] px-[2px] leading-[9px] whitespace-nowrap">{title}</legend>}
      {children}
    </fieldset>
  );
}

const push = "flex items-center justify-center border border-[#b5b5b5] bg-[#e2e2e2] h-[15px]";

function PlotDialog() {
  return (
    <section role="dialog" aria-label="Plot - Model" className="absolute top-[159px] left-[397px] flex h-[374px] w-[486px] flex-col border border-[#777] bg-[#f0f0f0] font-['Open_Sans',sans-serif] text-[7px] text-[#222]">
      <header className="flex h-[16px] shrink-0 items-center gap-[4px] bg-white px-[3px] font-['Lato',sans-serif] text-[8px] text-[#888]">
        <AcadLogo />
        Plot - Model
        <span className="ml-auto text-[10px]">?</span>
        <button aria-label="Close plot" className="mr-[8px] ml-[20px]">
          <Cross className="size-[8px]" />
        </button>
      </header>
      <div className="flex flex-1 justify-between px-[5px]">
        <div className="flex w-[240px] flex-col gap-[5px] pt-[18px]">
          <Group title="Page setup" className="h-[42px]">
            <label className="flex items-center gap-[20px] pt-[8px] pl-[7px]">
              <span className="w-[24px]">Name:</span>
              <select className="h-[15px] w-[170px] appearance-none border border-[#aaa] bg-[#e4e4e4] px-[3px]">
                <option>&lt;Previous plot&gt;</option>
              </select>
            </label>
          </Group>
          <Group title="Printer/plotter" className="h-[105px]">
            <div className="flex flex-col gap-[8px] pt-[6px] pl-[7px] leading-[9px]">
              <span>Name:</span>
              <span>Plotter:</span>
              <span>Where:</span>
              <span>Description:</span>
              <label className="flex items-center gap-[3px] pt-[2px] text-[#999]">
                <span className="grid size-[8px] place-items-center">
                  <input type="checkbox" defaultChecked disabled className="col-start-1 row-start-1 size-[8px] appearance-none border border-[#c4c4c4] bg-white" />
                  <svg viewBox="0 0 8 8" className="col-start-1 row-start-1 size-[6px]" aria-hidden="true">
                    <path d="M1 4l2 2 4-5" fill="none" stroke="#aaa" />
                  </svg>
                </span>
                Plot to file
              </label>
            </div>
          </Group>
          <Group title="Paper size" className="h-[36px]">
            <select aria-label="Paper size" className="mt-[5px] ml-[7px] h-[15px] w-[210px] appearance-none border border-[#aaa] bg-[#e4e4e4] px-[2px]">
              <option>ANSI A (11.00 x 8.50 Inches)</option>
            </select>
          </Group>
          <Group title="Plot area" className="h-[50px]">
            <label className="flex flex-col gap-[3px] pt-[5px] pl-[7px] leading-[9px]">
              What to plot:
              <select className="h-[15px] w-[90px] appearance-none border border-[#aaa] bg-[#e4e4e4] px-[2px]">
                <option>Window</option>
              </select>
            </label>
          </Group>
          <Group title="Plot offset (origin set to printable area)" className="h-[57px]">
            <div className="flex flex-col gap-[7px] pt-[4px] pl-[8px]">
              {["X:", "Y:"].map((axis) => (
                <label key={axis} className="flex items-center gap-[4px]">
                  <span className="w-[9px] underline">{axis}</span>
                  <input defaultValue="0.00" className="h-[15px] w-[48px] border border-[#999] bg-white px-[3px]" />
                  mm
                </label>
              ))}
            </div>
          </Group>
          <button className={`${push} mt-[4px] w-[46px]`}>
            <span>
              <u>P</u>review...
            </span>
          </button>
        </div>
        <div className="flex w-[240px] flex-col items-end pt-[3px]">
          <div className="flex h-[11px] items-center gap-[6px] pr-[19px]">
            <span className="flex h-[9px] w-[8px] items-center justify-center border border-[#9cc0b4] bg-white font-bold text-[#3a8a72]">i</span>
            <a href="#plotting" className="text-[#5b2a9a] underline">
              Learn about Plotting
            </a>
          </div>
          <fieldset className="mt-[4px] h-[42px] w-full border border-[#dfdfdf]">
            <legend className="ml-auto mr-[25px] px-[2px] leading-[9px]">Plot style table (pen assignments)</legend>
            <div className="flex items-center justify-end gap-[1px] pt-[8px] pr-[8px]">
              <Combo label="Plot style table" value="monochrome.ctb" className="h-[15px] w-[107px] border-[#8b8b8b] bg-white" tone="#555" />
              <button aria-label="Edit plot style" className="flex h-[16px] w-[16px] items-center justify-center border border-[#bbb] bg-[#e6e6e6]">
                <svg viewBox="0 0 12 12" className="size-[12px]">
                  <path d="M2 10l4-8 2 3-3 5zM6 7c4-2 6 2 3 4H2" fill="#e9d9a0" stroke="#443" />
                </svg>
              </button>
            </div>
          </fieldset>
          <Group className="mt-[9px] h-[68px] w-full pt-[7px] pr-[7px]">
            <div className="flex w-full flex-col items-end gap-[4px]">
              <Combo label="Shade plot" value="" className="h-[16px] w-[150px] border-[#999] bg-white" tone="#555" />
              <Combo label="Quality" value="" className="h-[14px] w-[150px] border-[#c4c4c4] bg-[#cfcfcf]" tone="#aaa" />
              <input aria-label="DPI" className="h-[15px] w-[150px] border border-[#d4d4d4]" />
            </div>
          </Group>
          <Group className="mt-[8px] h-[124px] w-full pt-[71px] pr-[41px] text-right">
            <p>Plot object lineweights</p>
            <p className="pt-[20px] pr-[4px]">Plot paperspace last</p>
          </Group>
          <Group className="mt-[6px] h-[57px] w-full pt-[19px]">
            <div className="flex items-center justify-end gap-[35px] pr-[6px]">
              <div className="flex flex-col gap-[8px] leading-[9px]">
                <p>Landscape</p>
                <p>Plot upside-down</p>
              </div>
              <span className="mb-[6px] flex h-[17px] w-[21px] items-center justify-center rounded-tr-[4px] border border-[#8aa] bg-gradient-to-br from-white to-[#bcdcdc] font-['Liberation_Sans',sans-serif] text-[12px] font-bold">
                A
              </span>
            </div>
          </Group>
          <div className="mt-[6px] flex items-center gap-[4px] pr-[2px]">
            <button className={`${push} w-[72px]`}>Apply to Layout</button>
            <button className={`${push} w-[50px]`}>OK</button>
            <button className={`${push} w-[50px]`}>Cancel</button>
            <button className={`${push} w-[50px]`}>
              <span>
                <u>H</u>elp
              </span>
            </button>
            <button aria-label="Less options" className="flex size-[14px] items-center justify-center rounded-full border-2 border-[#3b4a63] bg-white">
              <svg viewBox="0 0 8 8" className="size-[7px]">
                <path d="M5.500 1L2.500 4l3 3" fill="none" stroke="#111" strokeWidth="1.800" />
              </svg>
            </button>
          </div>
        </div>
      </div>
    </section>
  );
}

function PlotterDialog() {
  return (
    <section role="dialog" aria-label="Plotter Configuration Editor" className="absolute top-[169px] left-[501px] flex h-[352px] w-[278px] flex-col border border-[#8a8a8a] bg-[#f0f0f0] font-['Open_Sans',sans-serif] text-[7px] text-[#222] shadow-[0_2px_8px_rgba(0,0,0,0.4)]">
      <header className="flex h-[19px] shrink-0 items-center gap-[4px] bg-white px-[4px] font-['Lato',sans-serif] text-[8px] text-[#888]">
        <Icon name="plotter" />
        Plotter Configuration Editor - DWG To PDF.pc3
        <span className="ml-auto text-[10px]">?</span>
        <button aria-label="Close plotter" className="mr-[8px] ml-[18px]">
          <Cross className="size-[8px]" />
        </button>
      </header>
      <div className="flex flex-1 flex-col px-[6px] pt-[5px]">
        <div role="tablist" className="flex items-end">
          <button role="tab" className="h-[12px] border border-b-0 border-[#dcdcdc] px-[3px]">General</button>
          <button role="tab" className="h-[12px] border border-b-0 border-[#dcdcdc] px-[3px]">Ports</button>
          <button role="tab" aria-selected className="h-[15px] border border-b-0 border-[#dcdcdc] bg-white px-[4px]">Device and Document Settings</button>
        </div>
        <div className="flex h-[282px] flex-col justify-between border border-[#dcdcdc] bg-white px-[8px] pt-[7px] pb-[10px]">
          <div className="flex h-[60px] items-start gap-[5px] border border-[#888] pl-[4px] text-[8px] leading-[11px]">
            <Icon name="plotter" />
            DWG To PDF.pc3
          </div>
          <div className="flex justify-between">
            <button className={`${push} w-[56px]`}>Import...</button>
            <button className={`${push} w-[56px]`}>Save As...</button>
            <button className={`${push} w-[56px]`}>Defaults</button>
          </div>
        </div>
        <div className="mt-[7px] flex justify-end gap-[19px]">
          <button className={`${push} w-[49px]`}>OK</button>
          <button className={`${push} w-[49px]`}>Cancel</button>
          <button className={`${push} w-[49px]`}>Help</button>
        </div>
      </div>
    </section>
  );
}

const STEPS = ["Begin", "Media Bounds", "Printable Area", "Paper Size Name", "File name", "Finish"];
const EDGES: [string, string][] = [
  ["Top :", "0"],
  ["Bottom :", "0"],
  ["Left :", "0"],
  ["Right :", "13"],
];

function Lines({ lines }: { lines: string[] }) {
  return (
    <p className="whitespace-nowrap">
      {lines.map((l) => (
        <span key={l} className="block">
          {l}{" "}
        </span>
      ))}
    </p>
  );
}

function Wizard() {
  return (
    <section role="dialog" aria-label="Custom Paper Size - Printable Area" className="absolute top-[225px] left-[450px] flex h-[243px] w-[381px] flex-col border border-[#55564f] bg-[#f0f0f0] font-['Liberation_Sans',sans-serif] text-[7px] text-[#222] shadow-[0_3px_12px_rgba(0,0,0,0.5)]">
      <header className="flex h-[16px] shrink-0 items-center justify-between bg-[#40413c] pr-[6px] pl-[2px] font-['Lato',sans-serif] text-[8px] text-[#e4e4e0]">
        Custom Paper Size - Printable Area
        <button aria-label="Close wizard">
          <Cross tone="#eee" className="size-[8px]" />
        </button>
      </header>
      <div className="flex flex-1 flex-col px-[7px] pt-[15px]">
        <div className="flex h-[171px]">
          <ol className="flex w-[66px] shrink-0 flex-col leading-[9px] whitespace-nowrap">
            {STEPS.map((s) => (
              <li key={s} className={`flex h-[14px] items-start ${s === "File name" ? "text-[#a9a9a9]" : ""}`}>
                <span className="flex h-[9px] w-[9px] items-center">
                  {s === "Printable Area" && (
                    <svg viewBox="0 0 6 8" className="h-[7px] w-[5px]">
                      <path d="M0 0l6 4-6 4z" fill="#0a0a6a" />
                    </svg>
                  )}
                </span>
                {s}
              </li>
            ))}
          </ol>
          <div className="w-[80px] shrink-0 bg-[#1d9682]">
            <p className="pt-[6px] font-['DejaVu_Serif',serif] text-[17px] leading-[26px] font-bold text-white [writing-mode:vertical-rl]">Autodesk</p>
          </div>
          <div className="flex min-w-0 flex-1 flex-col pl-[3px] leading-[9px]">
            <div className="flex flex-col gap-[5px]">
              <Lines
                lines={[
                  "The Preview tile indicates the printable area based on the",
                  "currently selected paper size. To modify the non-printable area,",
                  "adjust Top, Bottom, Left and Right edges of the page.",
                ]}
              />
              <Lines
                lines={[
                  "NOTE: Most drivers calculate printable area from a specific",
                  "measurement away from the edge of the paper. Some drivers,",
                  "such as Postscript drivers, measure printable area from the actual",
                  "edge of the paper. Verify that your plotter is capable of plotting",
                  "from the actual dimensions you specify.",
                ]}
              />
            </div>
            <div className="mt-[4px] flex justify-between pr-[6px]">
              <div className="flex flex-col gap-[5px] pt-[5px]">
                {EDGES.map(([label, value]) => (
                  <label key={label} className="flex items-center">
                    <span className="w-[30px]">{label}</span>
                    <span className="flex h-[15px] items-stretch border border-[#7a9a9a] bg-white">
                      <span className="flex w-[28px] items-center pl-[2px]">
                        <input
                          defaultValue={value}
                          className={`h-[9px] text-[8px] outline-none ${value === "13" ? "w-[9px] bg-[#1673c4] text-white" : "w-[20px]"}`}
                        />
                      </span>
                      <span className="flex w-[11px] flex-col justify-between bg-[#e3e3e3] p-px">
                        {["M1 3l2-2 2 2z", "M1 1l2 2 2-2z"].map((d) => (
                          <span key={d} className="flex h-[5px] items-center justify-center border border-[#ccc] bg-[#f4f4f4]">
                            <svg viewBox="0 0 6 4" className="h-[4px] w-[6px] shrink-0">
                              <path d={d} fill="#111" />
                            </svg>
                          </span>
                        ))}
                      </span>
                    </span>
                  </label>
                ))}
              </div>
              <Group title="Preview" className="h-[88px] w-[111px]">
                <svg viewBox="0 0 109 78" className="h-[78px] w-[109px]" shapeRendering="crispEdges" aria-label="Paper preview">
                  <path d="M9 34h90v9H9z" fill="#fff" />
                  <path d="M9 34.500h90v9H9z" fill="none" stroke="#2a2850" strokeDasharray="7 3 2 3" />
                  <path d="M12 38.500h83M99.500 34v9" stroke="#2a2850" />
                </svg>
              </Group>
            </div>
          </div>
        </div>
        <hr className="mt-[8px] border-[#a4a4a4]" />
        <div className="mt-[9px] flex justify-end">
          <button className={`${push} w-[49px]`}>&lt; Geri</button>
          <button className="ml-[1px] flex h-[15px] w-[49px] items-center justify-center border-2 border-[#3d86bf] bg-[#e2e2e2]">Sonraki &gt;</button>
          <button className={`${push} ml-[8px] w-[49px]`}>İptal</button>
        </div>
      </div>
    </section>
  );
}

/* ---------- bottom bars ---------- */

const MODES: [string, boolean][] = [
  ["SNAP", false],
  ["GRID", false],
  ["ORTHO", true],
  ["POLAR", false],
  ["OSNAP", true],
  ["OTRACK", true],
  ["DUCS", false],
  ["DYN", true],
  ["LWT", false],
  ["MODEL", true],
];

function StatusBar() {
  return (
    <footer className="flex h-[17px] items-center border-t border-[#bdbdbd] bg-[#f0f0f0] px-[3px] font-['Liberation_Sans',sans-serif] text-[7px] text-[#222]">
      <output className="w-[120px] border border-[#c4c4c4] px-px leading-[11px]">509.4065, 45.7254 , 0.0000</output>
      <div className="ml-[2px] flex gap-[2px]">
        {MODES.map(([label, on]) => (
          <button
            key={label}
            aria-pressed={on}
            className={`border px-px leading-[11px] ${on ? "border-t-[#555] border-r-[#ddd] border-b-[#ddd] border-l-[#555] bg-[#f8f8f8]" : "border-t-[#f4f4f4] border-r-[#aaa] border-b-[#aaa] border-l-[#f4f4f4]"}`}
          >
            {label}
          </button>
        ))}
      </div>
      <div className="ml-auto flex items-center gap-[2px]">
        <Icon name="select" />
        <Icon name="layersLock" />
        <Icon name="palette" />
        <Chevron tone="#222" />
        <span className="ml-[5px] size-[8px] border border-[#4d6a8a] bg-[#eef4fa]" />
      </div>
    </footer>
  );
}

const APPS: { name: string; running?: boolean; active?: boolean; art: ReactNode }[] = [
  { name: "Start", art: <path d="M3 4l5-1v5H3zM9 3l6-1v6H9zM3 9h5v5l-5-1zM9 9h6v6l-6-1z" fill="#fff" /> },
  {
    name: "Opera GX",
    running: true,
    art: (
      <>
        <path d="M0 0h18v18H0z" fill="#0d0008" />
        <text x="9" y="12" textAnchor="middle" fontSize="8" fontFamily="Liberation Sans, sans-serif" fill="#e0104c">
          GX
        </text>
      </>
    ),
  },
  {
    name: "Firefox",
    running: true,
    art: (
      <>
        <circle cx="9" cy="10" r="7" fill="#f2703a" />
        <path d="M9 2c4-1 7 3 7 8a7 7 0 0 1-13 3c5 2 9-1 8-5z" fill="#f9b92c" />
        <circle cx="8" cy="10" r="3.500" fill="#7a3fb4" />
      </>
    ),
  },
  {
    name: "Explorer",
    running: true,
    art: (
      <>
        <path d="M2 3h6l2 2h6v11H2z" fill="#f3c94b" />
        <path d="M2 7h14v9H2z" fill="#fbdd74" />
        <path d="M5 11h8v5h-2v-2H7v2H5z" fill="#3f97cf" />
      </>
    ),
  },
  {
    name: "Snipping",
    running: true,
    art: (
      <>
        <circle cx="9" cy="7" r="6" fill="#9a3430" />
        <path d="M9 1v9M7 10l3 4M11 2l-3 12" stroke="#e8e8e8" strokeWidth="1.500" />
        <path d="M6 13a2 2 0 1 0 .1 0M12 13a2 2 0 1 0 .1 0" stroke="#3fa0dc" strokeWidth="1.500" fill="none" />
      </>
    ),
  },
  {
    name: "Calculator",
    art: (
      <>
        <path d="M3 1h12v16H3z" fill="#4585a8" />
        <path d="M4 3h10v4H4z" fill="#dff0f8" />
        <path d="M5 10h2M8 10h2M11 10h2M5 13h2M8 13h2M11 13h2M5 16h2M8 16h2" stroke="#fff" strokeWidth="2" />
      </>
    ),
  },
  {
    name: "Photos",
    art: (
      <>
        <path d="M2 1h13v16H2z" fill="#f2efe2" />
        <path d="M3 3h11v8H3z" fill="#3d8fae" />
        <path d="M3 8l5-2 6 5v3H3z" fill="#d9b23a" />
      </>
    ),
  },
  {
    name: "Edge",
    art: (
      <>
        <circle cx="9" cy="9" r="8" fill="#1c83c9" />
        <path d="M2 6c3-6 13-6 15 1 0 4-6 5-7 2-2-4-8-3-8-3z" fill="#4fd08a" />
        <path d="M6 9c-1 4 3 7 7 6-4 4-11 0-11-5 1-2 3-2 4-1z" fill="#0d5596" />
      </>
    ),
  },
  {
    name: "Acrobat",
    art: (
      <>
        <rect x="1" y="1" width="16" height="16" rx="3" fill="#b30b12" />
        <path d="M4 13c4-2 5-6 5-9 0 5 2 7 5 7-4-1-7 0-10 2z" fill="none" stroke="#fff" strokeWidth="1.400" />
      </>
    ),
  },
  {
    name: "Viewer",
    running: true,
    art: (
      <>
        <path d="M1 3h16v12H1z" fill="#d9e9f2" />
        <path d="M2 4h14v6H2z" fill="#4d93c2" />
        <path d="M2 10l5-2 9 3v3H2z" fill="#2f5a4a" />
      </>
    ),
  },
  {
    name: "OBS",
    running: true,
    art: (
      <>
        <circle cx="8" cy="8" r="7.500" fill="#1c1c1e" stroke="#c8c8c8" />
        <path d="M8 3c3 1 3 4 0 5M4 11c0-3 3-4 4-3M12 11c-2 1-4 0-4-3" stroke="#c8c8c8" strokeWidth="1.500" fill="none" />
        <circle cx="13" cy="13" r="4" fill="#e8141c" />
      </>
    ),
  },
  {
    name: "AutoCAD",
    running: true,
    active: true,
    art: (
      <>
        <path d="M1 0h16v18H1z" fill="#3fae94" />
        <path d="M3 14L7 3l3 11M4 11h6M14 3v11M14 8c-4 0-4 6 0 6" fill="none" stroke="#f2fbf8" strokeWidth="1.700" />
      </>
    ),
  },
];

function Taskbar() {
  return (
    <footer className="flex h-[26px] items-stretch justify-between bg-[#3a2e27] text-[#f0ece8]">
      <nav className="flex w-[393px]">
        {APPS.map((a) => (
          <button key={a.name} aria-label={a.name} className={`flex flex-1 flex-col items-center justify-between pt-[5px] ${a.active ? "bg-[#6a605a]" : ""}`}>
            <svg viewBox="0 0 18 18" className="size-[16px]">
              {a.art}
            </svg>
            <span className={`h-px w-[27px] ${a.running ? "bg-[#cbbdb2]" : ""}`} />
          </button>
        ))}
      </nav>
      <div className="flex items-center pr-[15px] font-['Open_Sans',sans-serif] text-[9px]">
        <svg viewBox="0 0 14 14" className="mr-[6px] size-[14px]" aria-hidden="true">
          <circle cx="7" cy="7" r="6.500" fill="#e2552c" />
          <path d="M7 2v6" stroke="#fbd37a" strokeWidth="2.500" />
          <circle cx="7" cy="10" r="2" fill="#fbd37a" />
        </svg>
        <span>26°C&nbsp; Güneşli</span>
        <svg viewBox="0 0 48 12" className="ml-[16px] h-[12px] w-[48px]" fill="none" stroke="#e8e4e0" aria-hidden="true">
          <path d="M1 8l4-4 4 4M18 3h9v6h-9zM20 11h7M29 5v3M36 5h2l3-3v8l-3-3h-2zM43 4c2 1 2 3 0 4M45 2c3 2 3 6 0 8" />
        </svg>
        <span className="ml-[6px] text-[7px]">TUR</span>
        <time className="ml-[10px] flex flex-col items-center text-[7px] leading-[12px]">
          <span>13:28</span>
          <span>2.07.2026</span>
        </time>
        <svg viewBox="0 0 14 14" className="ml-[12px] size-[13px]" fill="none" stroke="#e8e4e0" aria-hidden="true">
          <path d="M1 2h12v8H8l-3 3v-3H1zM4 5h6M4 7h6" />
        </svg>
      </div>
    </footer>
  );
}

export default function App() {
  return (
    <main className="relative flex h-screen flex-col overflow-hidden bg-[#f0f0f0] font-['Lato',sans-serif] text-[8px] leading-[12px]">
      <TitleBar />
      <ToolbarRows />
      <div className="flex min-h-0 flex-1">
        <PropertiesPalette />
        <div className="flex min-w-0 flex-1 flex-col">
          <div className="flex min-h-0 flex-1">
            <DrawToolbar />
            <div className="flex min-w-0 flex-1 flex-col border-r border-[#999]">
              <div className="relative min-h-0 flex-1 overflow-hidden bg-black">
                <ModelSpace />
              </div>
              <LayoutTabs />
              <div className="h-[6px]" />
            </div>
          </div>
          <CommandWindow />
        </div>
      </div>
      <StatusBar />
      <Taskbar />

      <PlotDialog />
      <PlotterDialog />
      <Wizard />
      <svg viewBox="0 0 10 14" className="pointer-events-none absolute top-[431px] left-[679px] h-[14px] w-[9px]" aria-hidden="true">
        <path d="M1 1v11l3-3 2 4 2-1-2-4h3z" fill="#fff" stroke="#555" strokeWidth=".8" />
      </svg>
    </main>
  );
}
